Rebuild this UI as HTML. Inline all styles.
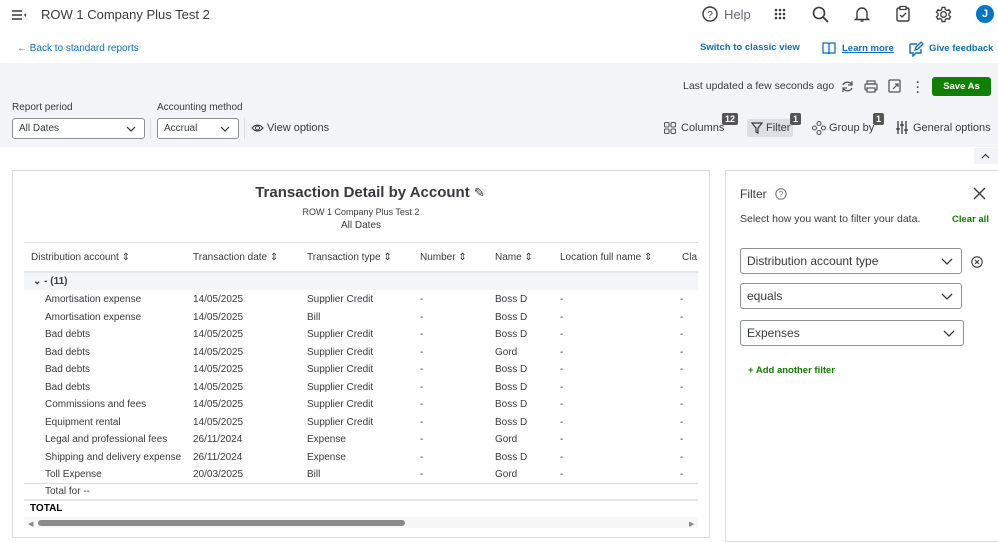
<!DOCTYPE html>
<html><head><meta charset="utf-8"><style>
*{box-sizing:border-box;margin:0;padding:0}
body{width:998px;height:539px;overflow:hidden;font-family:"Liberation Sans",sans-serif;background:#fff;color:#393a3d;position:relative}
.a{position:absolute;white-space:nowrap}
.blue{color:#0d6fc4}
.sel{position:absolute;border:1px solid #8d9096;border-radius:3px;background:#fff;font-size:11px;padding-left:6px;display:flex;align-items:center}
.sel svg{position:absolute;right:8px}
.t{font-size:10px;color:#393a3d;line-height:17.5px}
.h{font-size:10px;color:#393a3d}
.badge{position:absolute;background:#555;color:#fff;font-size:9px;font-weight:bold;border-radius:2px;padding:1px 3px}
</style></head><body>
<svg class="a" style="left:11px;top:8px" width="16" height="14" viewBox="0 0 16 14"><path d="M1 3h10M1 7h10M1 11h10" stroke="#393a3d" stroke-width="1.5"/><path d="M15 5l-2 2 2 2z" fill="#393a3d"/></svg>
<div class="a" style="left:41px;top:7px;font-size:13px;color:#393a3d">ROW 1 Company Plus Test 2</div>
<svg class="a" style="left:702px;top:6px" width="16" height="16"><circle cx="8" cy="8" r="7" fill="none" stroke="#393a3d" stroke-width="1.4"/><text x="8" y="12" font-size="10" text-anchor="middle" font-family="Liberation Sans" fill="#393a3d">?</text></svg>
<div class="a" style="left:724px;top:7px;font-size:13px;color:#6b6c72">Help</div>
<svg class="a" style="left:774px;top:8px" width="12" height="12"><g fill="#393a3d"><circle cx="2" cy="2" r="1.3"/><circle cx="6" cy="2" r="1.3"/><circle cx="10" cy="2" r="1.3"/><circle cx="2" cy="6" r="1.3"/><circle cx="6" cy="6" r="1.3"/><circle cx="10" cy="6" r="1.3"/><circle cx="2" cy="10" r="1.3"/><circle cx="6" cy="10" r="1.3"/><circle cx="10" cy="10" r="1.3"/></g></svg>
<svg class="a" style="left:812px;top:6px" width="18" height="18"><circle cx="7" cy="7" r="5.5" fill="none" stroke="#393a3d" stroke-width="1.6"/><path d="M11 11l5 5" stroke="#393a3d" stroke-width="1.8"/></svg>
<svg class="a" style="left:854px;top:5px" width="16" height="18"><path d="M3 13V8a5 5 0 0110 0v5l1.5 1.5h-13z" fill="none" stroke="#393a3d" stroke-width="1.4"/><path d="M6.5 16h3" stroke="#393a3d" stroke-width="1.4"/></svg>
<svg class="a" style="left:895px;top:5px" width="16" height="18"><rect x="2" y="3" width="12" height="13" rx="1.5" fill="none" stroke="#393a3d" stroke-width="1.4"/><rect x="5" y="1.5" width="6" height="3" fill="#fff" stroke="#393a3d" stroke-width="1.2"/><path d="M5 10l2 2 4-4" fill="none" stroke="#393a3d" stroke-width="1.3"/></svg>
<svg class="a" style="left:935px;top:6px" width="17" height="17" viewBox="0 0 24 24"><path d="M12 8a4 4 0 100 8 4 4 0 000-8z M10 2h4l.6 3 2.4 1.4 2.9-1 2 3.4-2.3 2v2.4l2.3 2-2 3.4-2.9-1L14.6 19l-.6 3h-4l-.6-3-2.4-1.4-2.9 1-2-3.4 2.3-2v-2.4l-2.3-2 2-3.4 2.9 1L9.4 5z" fill="none" stroke="#393a3d" stroke-width="1.8"/></svg>
<div class="a" style="left:976px;top:5px;width:18px;height:18px;border-radius:50%;background:#0077c5;color:#fff;font-size:11px;font-weight:bold;text-align:center;line-height:18px">J</div>
<div class="a blue" style="left:17px;top:43px;font-size:10px">&#8592; Back to standard reports</div>
<div class="a blue" style="left:700px;top:42px;font-size:9.5px;font-weight:bold">Switch to classic view</div>
<svg class="a" style="left:822px;top:42px" width="14" height="12"><path d="M1 1h5l1 1 1-1h5v10H8l-1 1-1-1H1z M7 2v9" fill="none" stroke="#0d6fc4" stroke-width="1.3"/></svg>
<div class="a blue" style="left:842px;top:43px;font-size:9.5px;font-weight:bold;text-decoration:underline">Learn more</div>
<svg class="a" style="left:908px;top:41px" width="16" height="16"><path d="M2 3h7M2 3v9h3v3l3-3h5V8" fill="none" stroke="#0d6fc4" stroke-width="1.4"/><path d="M7 9l1-3 5-5 2 2-5 5z" fill="none" stroke="#0d6fc4" stroke-width="1.3"/></svg>
<div class="a blue" style="left:929px;top:43px;font-size:9.5px;font-weight:bold">Give feedback</div>
<div class="a" style="left:0;top:63px;width:998px;height:84px;background:#f3f4f8"></div>
<div class="a" style="left:683px;top:80px;font-size:10.5px;color:#393a3d">Last updated a few seconds ago</div>
<svg class="a" style="left:841px;top:80px" width="13" height="13"><path d="M11 5A5 5 0 002 5M2 8a5 5 0 009 0" fill="none" stroke="#555" stroke-width="1.4"/><path d="M11 1v4H7M2 12V8h4" fill="none" stroke="#555" stroke-width="1.2"/></svg>
<svg class="a" style="left:864px;top:80px" width="14" height="13"><rect x="3" y="1" width="8" height="3" fill="none" stroke="#555" stroke-width="1.2"/><rect x="1" y="4" width="12" height="6" rx="1" fill="none" stroke="#555" stroke-width="1.2"/><rect x="3" y="8" width="8" height="4" fill="#fff" stroke="#555" stroke-width="1.2"/></svg>
<svg class="a" style="left:888px;top:79px" width="14" height="14"><rect x="1" y="1" width="11" height="12" rx="1" fill="none" stroke="#555" stroke-width="1.3"/><path d="M5 10l5-5M7 5h3v3" fill="none" stroke="#555" stroke-width="1.2"/></svg>
<div class="a" style="left:916px;top:80px;font-size:12px;font-weight:bold;color:#555;line-height:5px">&middot;<br>&middot;<br>&middot;</div>
<div class="a" style="left:932px;top:77px;width:59px;height:19px;background:#108000;border-radius:3px;color:#fff;font-size:9.5px;font-weight:bold;text-align:center;line-height:19px">Save As</div>
<div class="a" style="left:12px;top:102px;font-size:10px">Report period</div>
<div class="a" style="left:157px;top:102px;font-size:10px">Accounting method</div>
<div class="sel" style="left:12px;top:118px;width:133px;height:21px;font-size:10px">All Dates<svg width="10" height="6"><path d="M1 1l4 4 4-4" fill="none" stroke="#393a3d" stroke-width="1.2"/></svg></div>
<div class="a" style="left:150px;top:118px;width:1px;height:21px;background:#ddd"></div>
<div class="sel" style="left:157px;top:118px;width:82px;height:21px;font-size:10px">Accrual<svg width="10" height="6"><path d="M1 1l4 4 4-4" fill="none" stroke="#393a3d" stroke-width="1.2"/></svg></div>
<div class="a" style="left:244px;top:118px;width:1px;height:21px;background:#ddd"></div>
<svg class="a" style="left:251px;top:123px" width="13" height="10"><path d="M1 5Q6.5-1 12 5Q6.5 11 1 5z" fill="none" stroke="#393a3d" stroke-width="1.1"/><circle cx="6.5" cy="5" r="2" fill="none" stroke="#393a3d" stroke-width="1.1"/></svg>
<div class="a" style="left:267px;top:122px;font-size:11px">View options</div>
<svg class="a" style="left:664px;top:122px" width="12" height="12"><g fill="none" stroke="#555" stroke-width="1.1"><rect x="0.5" y="0.5" width="4.5" height="4.5" rx="1"/><rect x="7" y="0.5" width="4.5" height="4.5" rx="1"/><rect x="0.5" y="7" width="4.5" height="4.5" rx="1"/><rect x="7" y="7" width="4.5" height="4.5" rx="1"/></g></svg>
<div class="a" style="left:681px;top:122px;font-size:11px">Columns</div>
<div class="badge" style="left:722px;top:113px">12</div>
<div class="a" style="left:747px;top:119px;width:46px;height:18px;background:#dcdee3;border-radius:2px"></div>
<svg class="a" style="left:751px;top:122px" width="12" height="12"><path d="M1 1h10L7 6v5L5 10V6z" fill="none" stroke="#393a3d" stroke-width="1.2"/></svg>
<div class="a" style="left:766px;top:122px;font-size:11px">Filter</div>
<div class="badge" style="left:790px;top:113px">1</div>
<svg class="a" style="left:812px;top:121px" width="14" height="14"><g fill="none" stroke="#555" stroke-width="1.1"><circle cx="7" cy="2.5" r="2"/><circle cx="7" cy="11.5" r="2"/><circle cx="2.5" cy="7" r="2"/><circle cx="11.5" cy="7" r="2"/></g></svg>
<div class="a" style="left:829px;top:122px;font-size:11px">Group by</div>
<div class="badge" style="left:873px;top:113px">1</div>
<svg class="a" style="left:896px;top:121px" width="14" height="13"><g stroke="#393a3d" stroke-width="1.3"><path d="M2 0v13M6 0v13M10 0v13"/><path d="M0 8h4M4 4h4M8 9h4"/></g></svg>
<div class="a" style="left:913px;top:122px;font-size:11px">General options</div>
<div class="a" style="left:974px;top:148px;width:24px;height:16px;background:#f3f4f8"></div>
<svg class="a" style="left:981px;top:153px" width="9" height="6"><path d="M1 5l3.5-3.5L8 5" fill="none" stroke="#393a3d" stroke-width="1.2"/></svg>
<div class="a" style="left:12px;top:170px;width:698px;height:368px;border:1px solid #dcdcdc;background:#fff"></div>
<div class="a" style="left:0;top:184px;width:740px;text-align:center;font-size:15px;font-weight:bold;color:#393a3d">Transaction Detail by Account <span style="font-weight:normal;font-size:13px">&#9998;</span></div>
<div class="a" style="left:0;top:207px;width:722px;text-align:center;font-size:9px">ROW 1 Company Plus Test 2</div>
<div class="a" style="left:0;top:220px;width:722px;text-align:center;font-size:10px">All Dates</div>
<div class="a" style="left:24px;top:242px;width:674px;height:1px;background:#ddd"></div>
<div class="a h" style="left:31px;top:252px">Distribution account &#8661;</div>
<div class="a h" style="left:193px;top:252px">Transaction date &#8661;</div>
<div class="a h" style="left:307px;top:252px">Transaction type &#8661;</div>
<div class="a h" style="left:420px;top:252px">Number &#8661;</div>
<div class="a h" style="left:495px;top:252px">Name &#8661;</div>
<div class="a h" style="left:560px;top:252px">Location full name &#8661;</div>
<div class="a h" style="left:682px;top:252px">Cla</div>
<div class="a" style="left:24px;top:271px;width:674px;height:19px;background:#f4f5f8;border-top:2px solid #e6e7ea"></div>
<div class="a" style="left:33px;top:276px;font-size:10px;font-weight:bold">&#8964; - (11)</div>
<div class="a t" style="left:45px;top:291px">Amortisation expense<br>Amortisation expense<br>Bad debts<br>Bad debts<br>Bad debts<br>Bad debts<br>Commissions and fees<br>Equipment rental<br>Legal and professional fees<br>Shipping and delivery expense<br>Toll Expense</div>
<div class="a t" style="left:193px;top:291px">14/05/2025<br>14/05/2025<br>14/05/2025<br>14/05/2025<br>14/05/2025<br>14/05/2025<br>14/05/2025<br>14/05/2025<br>26/11/2024<br>26/11/2024<br>20/03/2025</div>
<div class="a t" style="left:307px;top:291px">Supplier Credit<br>Bill<br>Supplier Credit<br>Supplier Credit<br>Supplier Credit<br>Supplier Credit<br>Supplier Credit<br>Supplier Credit<br>Expense<br>Expense<br>Bill</div>
<div class="a t" style="left:420px;top:291px">-<br>-<br>-<br>-<br>-<br>-<br>-<br>-<br>-<br>-<br>-</div>
<div class="a t" style="left:495px;top:291px">Boss D<br>Boss D<br>Boss D<br>Gord<br>Boss D<br>Boss D<br>Boss D<br>Boss D<br>Gord<br>Boss D<br>Gord</div>
<div class="a t" style="left:560px;top:291px">-<br>-<br>-<br>-<br>-<br>-<br>-<br>-<br>-<br>-<br>-</div>
<div class="a t" style="left:680px;top:291px">-<br>-<br>-<br>-<br>-<br>-<br>-<br>-<br>-<br>-<br>-</div>
<div class="a" style="left:24px;top:483px;width:674px;height:1px;background:#ddd"></div>
<div class="a" style="left:45px;top:486px;font-size:10px">Total for --</div>
<div class="a" style="left:24px;top:499px;width:674px;height:2px;background:#e6e7ea"></div>
<div class="a" style="left:30px;top:503px;font-size:10px;font-weight:bold;color:#000">TOTAL</div>
<div class="a" style="left:24px;top:517px;width:674px;height:11px;background:#f7f7f7"></div>
<div class="a" style="left:28px;top:520px;font-size:7px;color:#888">&#9664;</div>
<div class="a" style="left:38px;top:519.5px;width:367px;height:6px;border-radius:3px;background:#8a8a8a"></div>
<div class="a" style="left:689px;top:520px;font-size:7px;color:#888">&#9654;</div>
<div class="a" style="left:725px;top:170px;width:280px;height:372px;border:1px solid #dcdcdc;background:#fff"></div>
<div class="a" style="left:740px;top:187px;font-size:12px">Filter</div>
<svg class="a" style="left:775px;top:188px" width="12" height="12"><circle cx="6" cy="6" r="5.2" fill="none" stroke="#6b6c72" stroke-width="1"/><text x="6" y="9" font-size="8" text-anchor="middle" font-family="Liberation Sans" fill="#6b6c72">?</text></svg>
<svg class="a" style="left:973px;top:187px" width="13" height="13"><path d="M1 1l11 11M12 1L1 12" stroke="#393a3d" stroke-width="1.4"/></svg>
<div class="a" style="left:740px;top:213px;font-size:10.5px">Select how you want to filter your data.</div>
<div class="a" style="left:952px;top:214px;font-size:9.5px;font-weight:bold;color:#108000">Clear all</div>
<div class="sel" style="left:740px;top:248px;width:222px;height:26px;font-size:12px">Distribution account type<svg width="12" height="7"><path d="M1 1l5 5 5-5" fill="none" stroke="#393a3d" stroke-width="1.3"/></svg></div>
<svg class="a" style="left:971px;top:256px" width="12" height="12"><circle cx="6" cy="6" r="5.2" fill="none" stroke="#393a3d" stroke-width="1.1"/><path d="M4 4l4 4M8 4l-4 4" stroke="#393a3d" stroke-width="1.1"/></svg>
<div class="sel" style="left:740px;top:283px;width:222px;height:26px;font-size:12px">equals<svg width="12" height="7"><path d="M1 1l5 5 5-5" fill="none" stroke="#393a3d" stroke-width="1.3"/></svg></div>
<div class="sel" style="left:740px;top:320px;width:224px;height:26px;font-size:12px">Expenses<svg width="12" height="7"><path d="M1 1l5 5 5-5" fill="none" stroke="#393a3d" stroke-width="1.3"/></svg></div>
<div class="a" style="left:748px;top:365px;font-size:9.5px;font-weight:bold;color:#108000">+ Add another filter</div>
</body></html>
